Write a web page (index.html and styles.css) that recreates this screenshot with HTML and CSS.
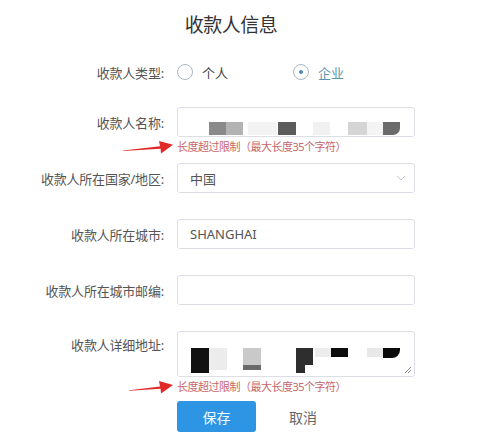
FILE: index.html
```html
<!DOCTYPE html>
<html lang="zh-CN">
<head>
<meta charset="utf-8">
<title>收款人信息</title>
<link rel="stylesheet" href="styles.css">
</head>
<body>
<div class="page">
  <h1 class="title">收款人信息</h1>
  <div class="form">
    <div class="row radio-row">
      <label class="label">收款人类型:</label>
      <div class="radios">
        <span class="radio first"><span class="circle"></span><span class="radio-text">个人</span></span>
        <span class="radio checked"><span class="circle"><span class="dot"></span></span><span class="radio-text">企业</span></span>
      </div>
    </div>

    <div class="row gap-err">
      <label class="label">收款人名称:</label>
      <div class="input masked">
        <span class="m a1"></span><span class="m a2"></span><span class="m a3"></span><span class="m a4"></span><span class="m a5"></span><span class="m a6"></span><span class="m a7"></span><span class="m a8"></span>
      </div>
    </div>
    <div class="row err-row gap-after-err">
      <svg class="arrow arrow-long" viewBox="0 0 50 14" width="50" height="14"><polygon points="0,10.4 37,6.2 36,1 50,4.8 38,13.5 37.6,8.8 0,10.9" fill="#e12a27"/></svg>
      <div class="error">长度超过限制（最大长度35个字符）</div>
    </div>

    <div class="row gap">
      <label class="label">收款人所在国家/地区:</label>
      <div class="input select"><span>中国</span>
        <svg class="chev" viewBox="0 0 10 6" width="10" height="6"><polyline points="1,1 5,5 9,1" fill="none" stroke="#c4c8ce" stroke-width="1"/></svg>
      </div>
    </div>

    <div class="row gap">
      <label class="label">收款人所在城市:</label>
      <div class="input"><span>SHANGHAI</span></div>
    </div>

    <div class="row gap">
      <label class="label">收款人所在城市邮编:</label>
      <div class="input"></div>
    </div>

    <div class="row gap-err textarea-row">
      <label class="label">收款人详细地址:</label>
      <div class="textarea">
        <span class="t b1"></span><span class="t b2"></span><span class="t b3"></span><span class="t b4"></span><span class="t b4s"></span><span class="t b5"></span><span class="t b6"></span><span class="t b7"></span><span class="t b8"></span>
        <svg class="grip" viewBox="0 0 8 8" width="8" height="8"><line x1="1" y1="7" x2="7" y2="1" stroke="#888" stroke-width="1"/><line x1="4" y1="7" x2="7" y2="4" stroke="#888" stroke-width="1"/></svg>
      </div>
    </div>
    <div class="row err-row gap-before-btn">
      <svg class="arrow arrow-short" viewBox="0 0 44 14" width="44" height="14"><polygon points="0,10.2 31,6.4 30,1 44,5 32,13.5 31.6,8.8 0,10.8" fill="#e12a27"/></svg>
      <div class="error">长度超过限制（最大长度35个字符）</div>
    </div>

    <div class="row btn-row">
      <span></span>
      <div class="buttons">
        <button class="btn primary">保存</button>
        <button class="btn text">取消</button>
      </div>
    </div>
  </div>
</div>
</body>
</html>
```

FILE: styles.css
```css
html, body {
  margin: 0;
  padding: 0;
  background: #ffffff;
}

body {
  font-family: "Noto Sans", "Noto Sans CJK SC", sans-serif;
  color: #555;
}

.page {
  width: 462px;
  padding-top: 10px;
}

.title {
  margin: 0 0 17px 0;
  height: 30px;
  line-height: 30px;
  text-align: center;
  font-size: 19px;
  font-weight: normal;
  letter-spacing: -0.5px;
  color: #333;
}

.form {
  display: flex;
  flex-direction: column;
}

.row {
  display: grid;
  grid-template-columns: 164px 238px;
  column-gap: 13px;
  align-items: center;
}

.label {
  text-align: right;
  font-size: 13px;
  color: #555;
  letter-spacing: -0.2px;
}

.radio-row {
  height: 30px;
  margin-bottom: 20px;
}

.radios {
  display: flex;
  align-items: center;
}

.radio {
  display: flex;
  align-items: center;
  gap: 9px;
  font-size: 13px;
  color: #444;
}

.radio.first {
  width: 116px;
}

.circle {
  width: 16px;
  height: 16px;
  box-sizing: border-box;
  border: 1px solid #a9b8c2;
  border-radius: 50%;
  display: flex;
  align-items: center;
  justify-content: center;
}

.dot {
  width: 4px;
  height: 4px;
  border-radius: 50%;
  background: #4a8cb5;
}

.checked .radio-text {
  color: #5a93ad;
}

.gap { margin-bottom: 26px; }
.gap-err { margin-bottom: 2px; }
.gap-after-err { margin-bottom: 8px; }
.gap-before-btn { margin-bottom: 6px; }

.input {
  height: 30px;
  box-sizing: border-box;
  border: 1px solid #dcdfe6;
  border-radius: 3px;
  padding: 0 12px;
  display: flex;
  align-items: center;
  font-size: 13px;
  color: #555;
  background: #fff;
}

.select {
  justify-content: space-between;
  padding-right: 8px;
}

.masked {
  padding: 0 0 1px 31px;
  align-items: flex-end;
}

.m {
  display: block;
  height: 13px;
  flex: none;
}
.a1 { width: 17px; background: #8a8a8a; }
.a2 { width: 17px; background: #b3b3b3; }
.a3 { width: 29px; background: #f3f3f3; margin-left: 5px; }
.a4 { width: 18px; background: #5c5c5c; margin-left: 1px; }
.a5 { width: 17px; background: #f1f1f1; margin-left: 17px; }
.a6 { width: 19px; background: #d5d5d5; margin-left: 18px; }
.a7 { width: 16px; background: #f4f4f4; }
.a8 { width: 17px; background: #6b6b6b; border-bottom-right-radius: 7px; }

.textarea {
  position: relative;
  height: 46px;
  box-sizing: border-box;
  border: 1px solid #dcdfe6;
  border-radius: 3px;
  padding: 16px 0 0 13px;
  display: flex;
  align-items: flex-start;
  background: #fff;
}

.textarea-row {
  align-items: start;
}

.textarea-row .label {
  line-height: 28px;
}

.t { display: block; flex: none; }
.b1 { width: 18px; height: 25px; background: #111; }
.b2 { width: 18px; height: 22px; background: #ececec; }
.b3 { width: 18px; height: 17px; background: #c9c9c9; margin-left: 16px; box-shadow: 0 5px 0 0 #6a6a6a; }
.b4 { width: 9px; height: 25px; background: #2e2e2e; margin-left: 35px; }
.b4s { width: 8px; height: 17px; background: #2e2e2e; }
.b5 { width: 16px; height: 9px; background: #ececec; margin-left: 2px; }
.b6 { width: 17px; height: 9px; background: #0c0c0c; }
.b7 { width: 16px; height: 9px; background: #e8e8e8; margin-left: 19px; }
.b8 { width: 17px; height: 10px; background: #0a0a0a; border-bottom-right-radius: 8px; }

.grip {
  position: absolute;
  right: 2px;
  bottom: 2px;
}

.err-row {
  height: 16px;
}

.arrow {
  justify-self: end;
  margin-right: -9px;
}

.error {
  font-size: 11px;
  line-height: 16px;
  color: #c8666a;
  letter-spacing: -0.5px;
  white-space: nowrap;
}

.btn-row {
  height: 31px;
}

.buttons {
  display: flex;
  align-items: center;
  gap: 33px;
}

.btn {
  font-family: "Noto Sans CJK SC", sans-serif;
  font-size: 14px;
  border: none;
  background: none;
  padding: 0;
  cursor: pointer;
}

.primary {
  width: 79px;
  height: 31px;
  background: #2e95e4;
  color: #f2fbff;
  border-radius: 3px;
}

.text {
  color: #666;
}
```
